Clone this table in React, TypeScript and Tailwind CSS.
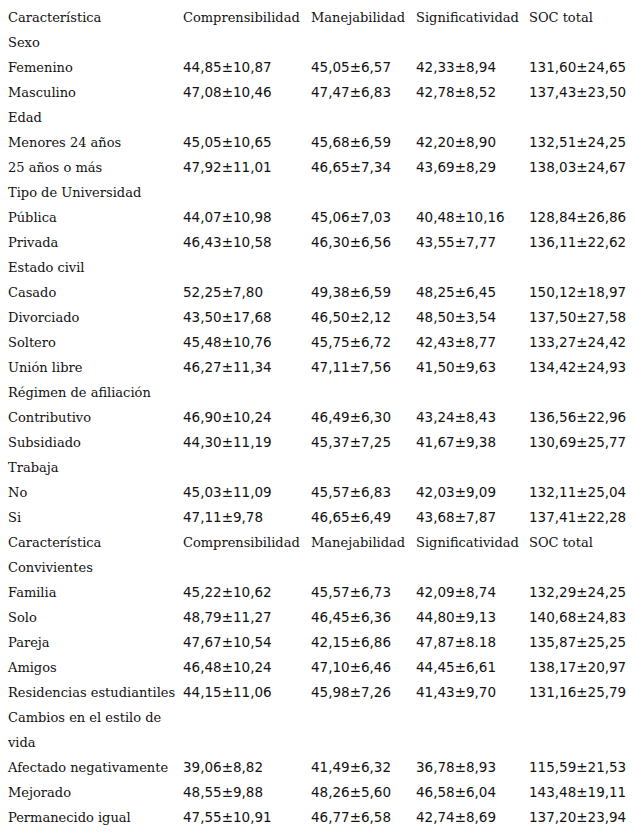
import React from 'react';

type Row = { label: string; values?: string[]; kind?: 'head' | 'group' | 'data' };

const header = ['Comprensibilidad', 'Manejabilidad', 'Significatividad', 'SOC total'];

const rows: Row[] = [
    { label: 'Característica', values: header, kind: 'head' },
    { label: 'Sexo', kind: 'group' },
    { label: 'Femenino', values: ['44,85±10,87', '45,05±6,57', '42,33±8,94', '131,60±24,65'] },
    { label: 'Masculino', values: ['47,08±10,46', '47,47±6,83', '42,78±8,52', '137,43±23,50'] },
    { label: 'Edad', kind: 'group' },
    { label: 'Menores 24 años', values: ['45,05±10,65', '45,68±6,59', '42,20±8,90', '132,51±24,25'] },
    { label: '25 años o más', values: ['47,92±11,01', '46,65±7,34', '43,69±8,29', '138,03±24,67'] },
    { label: 'Tipo de Universidad', kind: 'group' },
    { label: 'Pública', values: ['44,07±10,98', '45,06±7,03', '40,48±10,16', '128,84±26,86'] },
    { label: 'Privada', values: ['46,43±10,58', '46,30±6,56', '43,55±7,77', '136,11±22,62'] },
    { label: 'Estado civil', kind: 'group' },
    { label: 'Casado', values: ['52,25±7,80', '49,38±6,59', '48,25±6,45', '150,12±18,97'] },
    { label: 'Divorciado', values: ['43,50±17,68', '46,50±2,12', '48,50±3,54', '137,50±27,58'] },
    { label: 'Soltero', values: ['45,48±10,76', '45,75±6,72', '42,43±8,77', '133,27±24,42'] },
    { label: 'Unión libre', values: ['46,27±11,34', '47,11±7,56', '41,50±9,63', '134,42±24,93'] },
    { label: 'Régimen de afiliación', kind: 'group' },
    { label: 'Contributivo', values: ['46,90±10,24', '46,49±6,30', '43,24±8,43', '136,56±22,96'] },
    { label: 'Subsidiado', values: ['44,30±11,19', '45,37±7,25', '41,67±9,38', '130,69±25,77'] },
    { label: 'Trabaja', kind: 'group' },
    { label: 'No', values: ['45,03±11,09', '45,57±6,83', '42,03±9,09', '132,11±25,04'] },
    { label: 'Si', values: ['47,11±9,78', '46,65±6,49', '43,68±7,87', '137,41±22,28'] },
    { label: 'Característica', values: header, kind: 'head' },
    { label: 'Convivientes', kind: 'group' },
    { label: 'Familia', values: ['45,22±10,62', '45,57±6,73', '42,09±8,74', '132,29±24,25'] },
    { label: 'Solo', values: ['48,79±11,27', '46,45±6,36', '44,80±9,13', '140,68±24,83'] },
    { label: 'Pareja', values: ['47,67±10,54', '42,15±6,86', '47,87±8.18', '135,87±25,25'] },
    { label: 'Amigos', values: ['46,48±10,24', '47,10±6,46', '44,45±6,61', '138,17±20,97'] },
    { label: 'Residencias estudiantiles', values: ['44,15±11,06', '45,98±7,26', '41,43±9,70', '131,16±25,79'] },
    { label: 'Cambios en el estilo de vida', kind: 'group' },
    { label: 'Afectado negativamente', values: ['39,06±8,82', '41,49±6,32', '36,78±8,93', '115,59±21,53'] },
    { label: 'Mejorado', values: ['48,55±9,88', '48,26±5,60', '46,58±6,04', '143,48±19,11'] },
    { label: 'Permanecido igual', values: ['47,55±10,91', '46,77±6,58', '42,74±8,69', '137,20±23,94'] },
];

const serif = "font-['DejaVu_Serif',serif]";
const sans = "font-['DejaVu_Sans',sans-serif]";

export default function App() {
    return (
        <div className="w-[637px] h-[833px] bg-white text-[#111] pt-[5px] pl-2 overflow-hidden">
            {rows.map((r, i) => (
                <div key={i} className="grid grid-cols-[175px_128px_105px_113px_1fr] leading-[25px]">
                    <div className={`${serif} text-[13px] pr-1`}>{r.label}</div>
                    {(r.values ?? ['', '', '', '']).map((v, j) => (
                        <div
                            key={j}
                            className={r.kind === 'head' ? `${serif} text-[13px] whitespace-nowrap` : `${sans} text-[13.5px] whitespace-nowrap`}
                        >
                            {v}
                        </div>
                    ))}
                </div>
            ))}
        </div>
    );
}
